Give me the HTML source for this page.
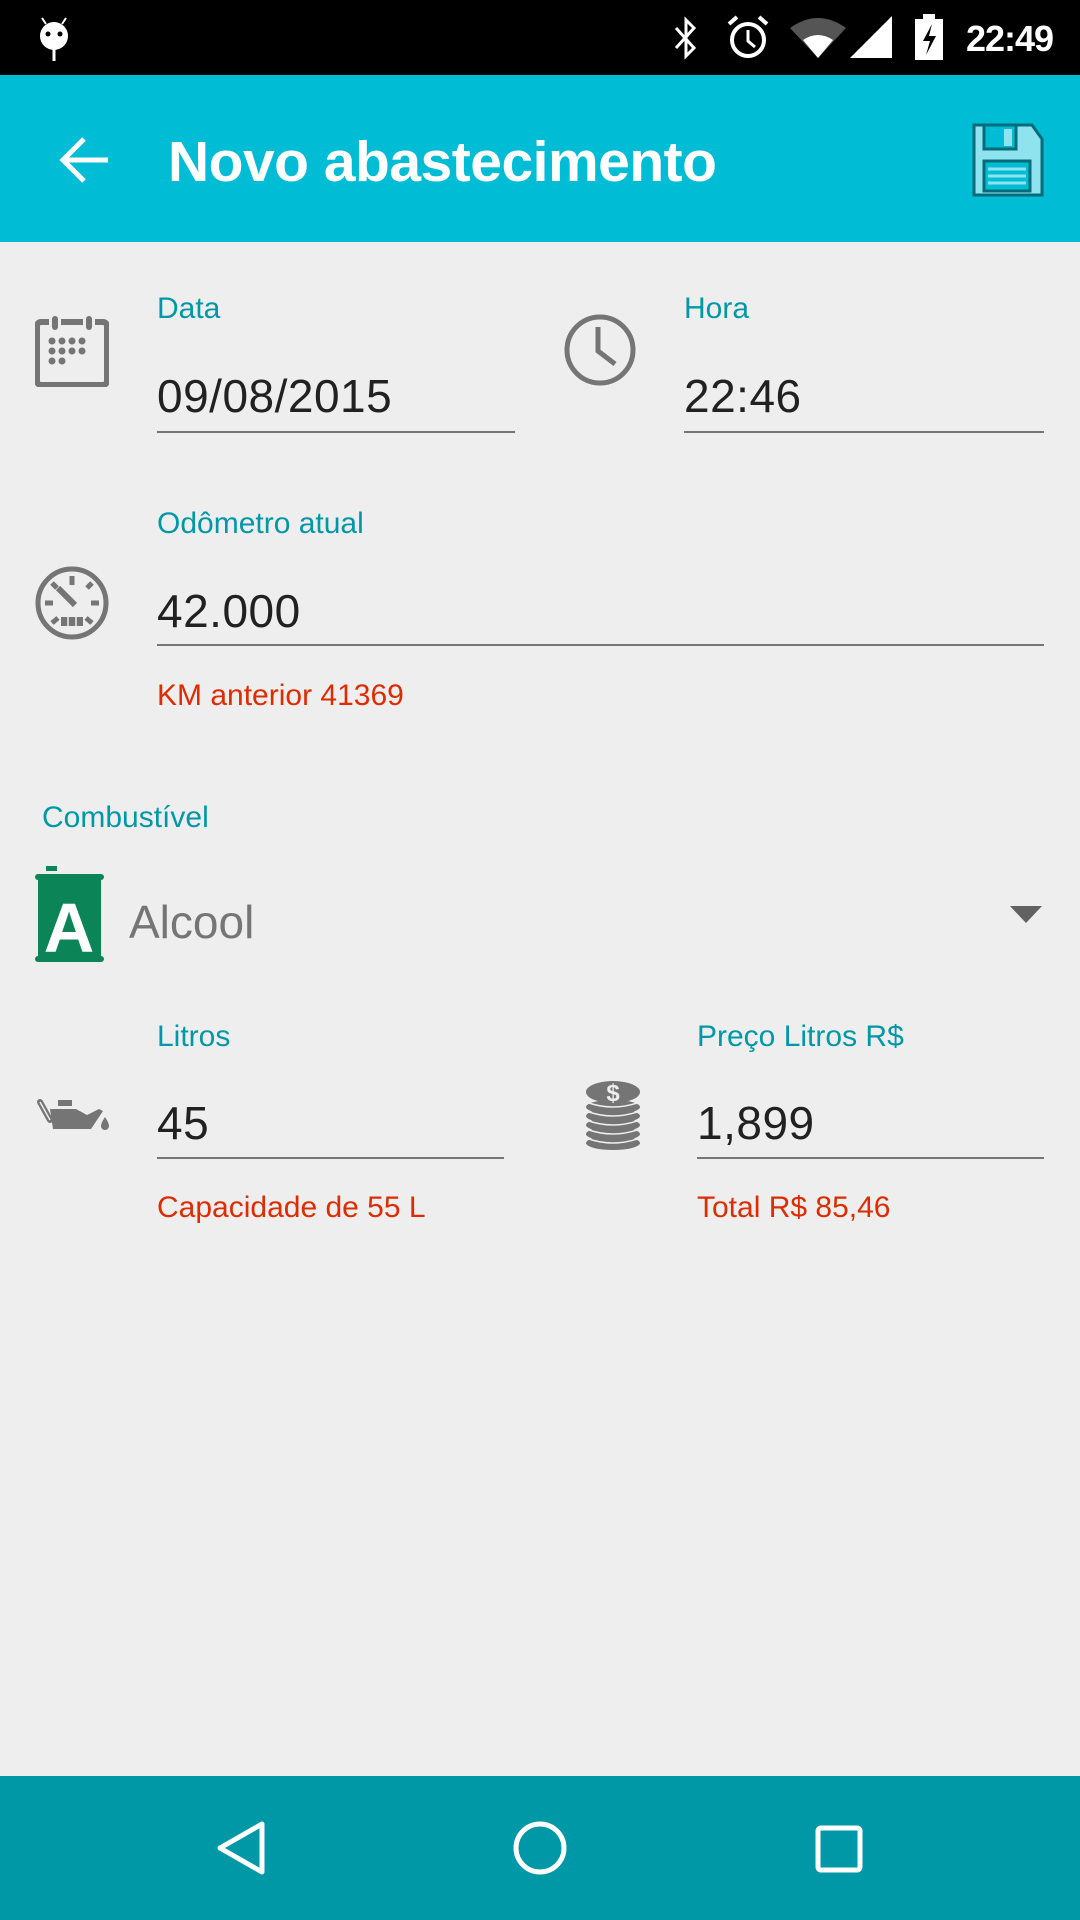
<!DOCTYPE html>
<html><head><meta charset="utf-8"><style>
*{margin:0;padding:0;box-sizing:border-box}
body{width:1080px;height:1920px;background:#EEEEEE;position:relative;overflow:hidden;font-family:"Liberation Sans",sans-serif}
.a{position:absolute;white-space:nowrap}
.lbl{font-size:30px;color:#0097A7;line-height:1}
.val{font-size:46px;color:#212121;line-height:1;letter-spacing:0.5px}
.red{font-size:30px;color:#DD2C00;line-height:1}
.ul{position:absolute;height:2px;background:#757575}
</style></head><body>
<div class="a" style="left:0;top:0;width:1080px;height:75px;background:#000"></div>
<svg class="a" style="left:36px;top:16px" width="36" height="46" viewBox="0 0 36 46"><path d="M6 2l4 6M30 2l-4 6" stroke="#fff" stroke-width="2"/><ellipse cx="18" cy="20" rx="14" ry="14" fill="#fff"/><circle cx="12" cy="18" r="2.5" fill="#000"/><circle cx="24" cy="18" r="2.5" fill="#000"/><rect x="16.5" y="33" width="3" height="12" fill="#fff"/></svg>
<svg class="a" style="left:672px;top:16px" width="28" height="44" viewBox="0 0 28 44"><path d="M4 12l18 20-8 8V4l8 8L4 32" stroke="#fff" stroke-width="3" fill="none"/></svg>
<svg class="a" style="left:726px;top:14px" width="44" height="46" viewBox="0 0 44 46"><circle cx="22" cy="26" r="16" stroke="#fff" stroke-width="4" fill="none"/><path d="M22 16v11l7 6" stroke="#fff" stroke-width="3" fill="none"/><path d="M3 10l8-7M41 10l-8-7" stroke="#fff" stroke-width="4"/></svg>
<svg class="a" style="left:790px;top:16px" width="56" height="42" viewBox="0 0 56 42"><path d="M0 12Q28-8 56 12L28 42z" fill="#555"/><path d="M13 24Q28 14 43 24L28 42z" fill="#fff"/></svg>
<svg class="a" style="left:850px;top:16px" width="42" height="42"><path d="M42 0V42H0z" fill="#fff"/></svg>
<svg class="a" style="left:914px;top:14px" width="30" height="46" viewBox="0 0 30 46"><rect x="9" y="0" width="12" height="5" fill="#fff"/><rect x="1" y="5" width="28" height="41" fill="#fff"/><path d="M18 10l-9 17h7l-4 14 10-19h-7z" fill="#000"/></svg>
<div class="a" style="left:966px;top:18px;font-size:36px;color:#fff;font-weight:bold;letter-spacing:-1px">22:49</div>
<div class="a" style="left:0;top:75px;width:1080px;height:167px;background:#00BCD4"></div>
<svg class="a" style="left:58px;top:135px" width="52" height="50" viewBox="0 0 52 50"><path d="M50 25H6M26 4L5 25l21 21" stroke="#fff" stroke-width="5" fill="none"/></svg>
<div class="a" style="left:168px;top:129px;font-size:57px;color:#fff;font-weight:bold;letter-spacing:-0.5px">Novo abastecimento</div>
<svg class="a" style="left:972px;top:123px" width="72" height="74" viewBox="0 0 72 74"><path d="M2 2h58l10 14v56H2z" fill="#8FE3EF" stroke="#076C7A" stroke-width="3"/><rect x="12" y="2" width="32" height="24" fill="#00BCD4" stroke="#076C7A" stroke-width="3"/><rect x="32" y="6" width="8" height="17" fill="#8FE3EF"/><rect x="12" y="38" width="46" height="30" fill="#00BCD4" stroke="#076C7A" stroke-width="3"/><path d="M16 46h38M16 53h38M16 60h38" stroke="#8FE3EF" stroke-width="3"/></svg>

<svg class="a" style="left:35px;top:314px" width="74" height="73" viewBox="0 0 74 73"><path d="M14 8H6a4 4 0 0 0-4 4v55a4 4 0 0 0 4 4h62a4 4 0 0 0 4-4V12a4 4 0 0 0-4-4h-8M26 8h22" stroke="#757575" stroke-width="6" fill="none"/><rect x="17" y="2" width="6" height="14" rx="3" fill="#757575"/><rect x="51" y="2" width="6" height="14" rx="3" fill="#757575"/><g fill="#757575"><circle cx="17" cy="27" r="3.5"/><circle cx="27" cy="27" r="3.5"/><circle cx="37" cy="27" r="3.5"/><circle cx="47" cy="27" r="3.5"/><circle cx="17" cy="37" r="3.5"/><circle cx="27" cy="37" r="3.5"/><circle cx="37" cy="37" r="3.5"/><circle cx="47" cy="37" r="3.5"/><circle cx="17" cy="47" r="3.5"/><circle cx="27" cy="47" r="3.5"/></g></svg>
<div class="a lbl" style="left:157px;top:294px">Data</div>
<div class="a val" style="left:157px;top:373px">09/08/2015</div>
<div class="ul" style="left:157px;top:431px;width:358px"></div>

<svg class="a" style="left:563px;top:313px" width="74" height="74" viewBox="0 0 74 74"><circle cx="37" cy="37" r="33" stroke="#757575" stroke-width="5" fill="none"/><path d="M35 14v24l17 13" stroke="#757575" stroke-width="5" fill="none"/></svg>
<div class="a lbl" style="left:684px;top:294px">Hora</div>
<div class="a val" style="left:684px;top:373px">22:46</div>
<div class="ul" style="left:684px;top:431px;width:360px"></div>

<svg class="a" style="left:35px;top:566px" width="74" height="74" viewBox="0 0 74 74"><circle cx="37" cy="37" r="34" stroke="#757575" stroke-width="5" fill="none"/><g stroke="#757575" stroke-width="5"><path d="M37 10v9M10 37h8M56 37h8M17 17l5 5M57 17l-5 5M17 57l6-5M57 57l-6-5"/><path d="M23 22l17 17" stroke-width="6"/></g><rect x="26" y="51" width="22" height="9" fill="#757575"/><path d="M33 51v9M41 51v9" stroke="#eee" stroke-width="1.5"/></svg>
<div class="a lbl" style="left:157px;top:509px">Odômetro atual</div>
<div class="a val" style="left:157px;top:588px">42.000</div>
<div class="ul" style="left:157px;top:644px;width:887px"></div>
<div class="a red" style="left:157px;top:681px">KM anterior 41369</div>

<div class="a lbl" style="left:42px;top:803px">Combustível</div>
<svg class="a" style="left:35px;top:866px" width="70" height="100" viewBox="0 0 70 100"><rect x="11" y="0" width="11" height="5" fill="#0B8457"/><rect x="0" y="8" width="69" height="6" rx="3" fill="#0B8457"/><rect x="3" y="10" width="63" height="84" fill="#0B8457"/><rect x="0" y="90" width="69" height="6" rx="3" fill="#0B8457"/><text x="34" y="86" font-family="Liberation Sans" font-weight="bold" font-size="70" fill="#fff" text-anchor="middle">A</text></svg>
<div class="a" style="left:129px;top:895px;font-size:46px;color:#757575">Alcool</div>
<svg class="a" style="left:1010px;top:906px" width="32" height="18"><path d="M0 0h32L16 17z" fill="#616161"/></svg>

<svg class="a" style="left:35px;top:1098px" width="74" height="34" viewBox="0 0 74 34"><path d="M5 4l10 18" stroke="#757575" stroke-width="6" stroke-linecap="round" fill="none"/><path d="M5 4l10 18" stroke="#eee" stroke-width="1.5" fill="none"/><rect x="23" y="2" width="14" height="6" fill="#757575"/><path d="M15 11h26l11 6 12-6 4 2-12 18H18z" fill="#757575"/><path d="M70 19q-4 6-4 9a4 4 0 0 0 8 0q0-3-4-9z" fill="#757575"/></svg>
<div class="a lbl" style="left:157px;top:1022px">Litros</div>
<div class="a val" style="left:157px;top:1100px">45</div>
<div class="ul" style="left:157px;top:1157px;width:347px"></div>
<div class="a red" style="left:157px;top:1193px">Capacidade de 55 L</div>

<svg class="a" style="left:585px;top:1076px" width="56" height="74" viewBox="0 0 56 74"><g fill="#757575"><ellipse cx="28" cy="67" rx="27" ry="7"/><ellipse cx="28" cy="58" rx="27" ry="7"/><ellipse cx="28" cy="49" rx="27" ry="7"/><ellipse cx="28" cy="40" rx="27" ry="7"/><ellipse cx="28" cy="31" rx="27" ry="7"/></g><g stroke="#eee" stroke-width="1.5" fill="none"><path d="M1 35q27 10 54 0M1 44q27 10 54 0M1 53q27 10 54 0M1 62q27 10 54 0M1 26q27 10 54 0"/></g><ellipse cx="28" cy="16" rx="27" ry="11" fill="#757575"/><text x="28" y="25" font-family="Liberation Sans" font-weight="bold" font-size="24" fill="#eee" text-anchor="middle">$</text></svg>
<div class="a lbl" style="left:697px;top:1022px">Preço Litros R$</div>
<div class="a val" style="left:697px;top:1100px">1,899</div>
<div class="ul" style="left:697px;top:1157px;width:347px"></div>
<div class="a red" style="left:697px;top:1193px">Total R$ 85,46</div>

<div class="a" style="left:0;top:1776px;width:1080px;height:144px;background:#0097A7"></div>
<svg class="a" style="left:214px;top:1820px" width="54" height="56" viewBox="0 0 54 56"><path d="M48 4v48L6 28z" stroke="#fff" stroke-width="5" fill="none" stroke-linejoin="round"/></svg>
<svg class="a" style="left:512px;top:1820px" width="56" height="56"><circle cx="28" cy="28" r="24" stroke="#fff" stroke-width="5" fill="none"/></svg>
<svg class="a" style="left:814px;top:1824px" width="50" height="50"><rect x="4" y="4" width="42" height="42" rx="3" stroke="#fff" stroke-width="5" fill="none"/></svg>
</body></html>
